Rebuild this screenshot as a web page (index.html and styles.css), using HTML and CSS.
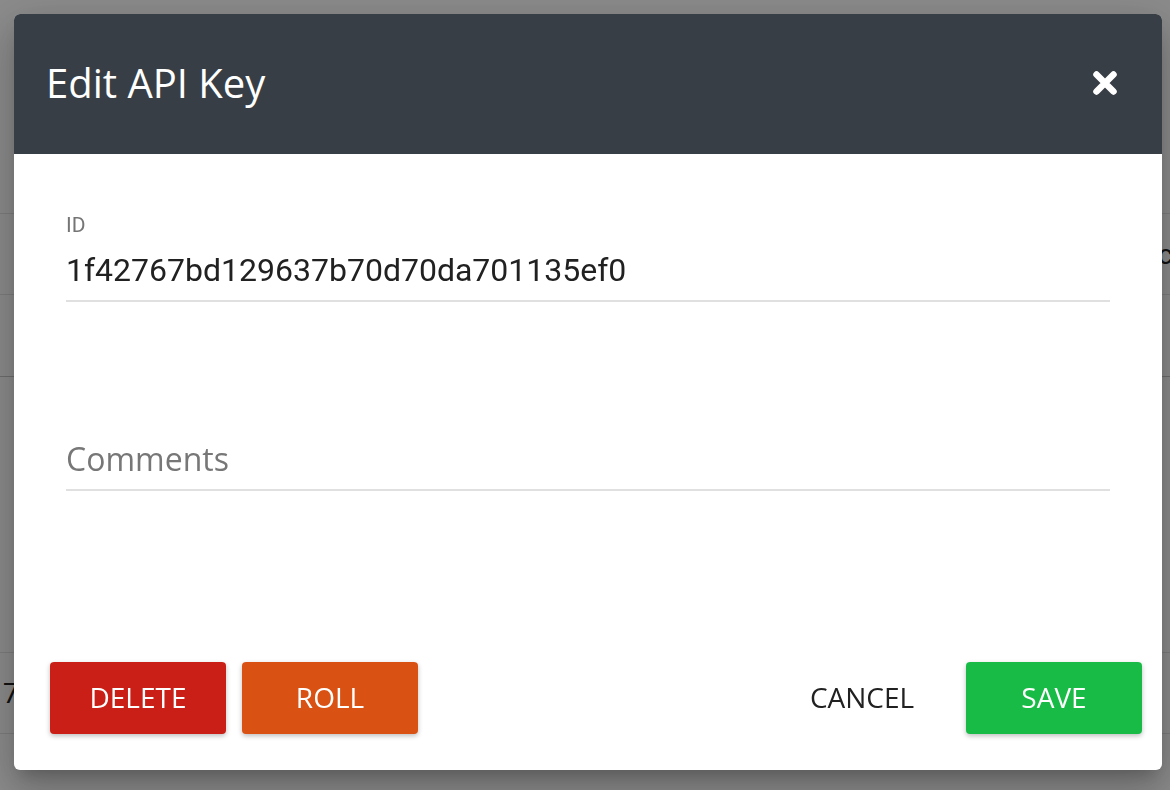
FILE: index.html
```html
<!DOCTYPE html>
<html lang="en">
<head>
<meta charset="utf-8">
<title>Edit API Key</title>
<link rel="stylesheet" href="styles.css">
</head>
<body>
<div class="page">
  <div class="page-top"></div>
  <div class="row"><span class="cell"></span><span class="cell">c</span></div>
  <div class="row row-head"><span class="cell"></span><span class="cell"></span></div>
  <div class="row row-tall"><span class="cell"></span><span class="cell"></span></div>
  <div class="row"><span class="cell cell-left">7</span><span class="cell"></span></div>
</div>

<div class="overlay">
  <div class="modal">
    <div class="modal-header">
      <h1 class="modal-title">Edit API Key</h1>
      <button class="close-btn" aria-label="Close">
        <svg width="26" height="26" viewBox="0 0 26 26"><path d="M4.5 4.5L21.5 21.5M21.5 4.5L4.5 21.5" stroke="#fff" stroke-width="6.5" stroke-linecap="round" fill="none"/></svg>
      </button>
    </div>
    <div class="modal-body">
      <div class="field">
        <div class="field-label">ID</div>
        <div class="field-value">1f42767bd129637b70d70da701135ef0</div>
      </div>
      <div class="field field-comments">
        <div class="field-placeholder">Comments</div>
      </div>
    </div>
    <div class="modal-footer">
      <button class="btn btn-delete">DELETE</button>
      <button class="btn btn-roll">ROLL</button>
      <div class="spacer"></div>
      <button class="btn btn-flat">CANCEL</button>
      <button class="btn btn-save">SAVE</button>
    </div>
  </div>
</div>
</body>
</html>
```

FILE: styles.css
```css
html, body {
  margin: 0;
  padding: 0;
}
body {
  font-family: Roboto, "Open Sans", sans-serif;
  background: #fff;
  overflow: hidden;
  width: 1170px;
  height: 790px;
}

/* underlying page */
.page {
  height: 790px;
}
.page-top {
  height: 213px;
  border-bottom: 1px solid #e4e4e4;
}
.row {
  height: 80px;
  border-bottom: 1px solid #e4e4e4;
  display: grid;
  grid-template-columns: 1158px 1fr;
  align-items: center;
  font-size: 28px;
  color: #222;
  white-space: nowrap;
  overflow: hidden;
}
.row-head {
  height: 81px;
  border-bottom-color: #c8c8c8;
}
.row-tall {
  height: 275px;
}
.cell-left {
  padding-left: 3px;
}

/* overlay + modal */
.overlay {
  position: fixed;
  inset: 0;
  background: rgba(0, 0, 0, 0.455);
  display: flex;
  align-items: flex-start;
  padding: 14px 0 0 14px;
  box-sizing: border-box;
}
.modal {
  width: 1148px;
  height: 756px;
  background: #fff;
  border-radius: 6px;
  overflow: hidden;
  display: flex;
  flex-direction: column;
  box-shadow: 0 11px 15px -7px rgba(0,0,0,.2), 0 24px 38px 3px rgba(0,0,0,.14), 0 9px 46px 8px rgba(0,0,0,.12);
}
.modal-header {
  height: 140px;
  flex: none;
  background: #383e45;
  display: flex;
  align-items: center;
  justify-content: space-between;
  padding: 0 44px 3px 32px;
  box-sizing: border-box;
}
.modal-title {
  margin: 0;
  font-family: "Open Sans", sans-serif;
  font-weight: 400;
  font-size: 40px;
  line-height: 40px;
  color: #fff;
}
.close-btn {
  border: 0;
  background: none;
  padding: 0;
  width: 26px;
  height: 26px;
  display: block;
}
.close-btn svg {
  display: block;
}

.modal-body {
  padding: 59px 52px 0;
}
.field-label {
  font-family: Roboto, sans-serif;
  font-size: 21px;
  line-height: 24px;
  color: #757575;
}
.field-value {
  margin-top: 13px;
  font-family: Roboto, sans-serif;
  font-size: 32px;
  line-height: 40px;
  color: #212121;
  padding-bottom: 10px;
  border-bottom: 2px solid #e0e0e0;
}
.field-comments {
  margin-top: 137px;
  padding-bottom: 10px;
  border-bottom: 2px solid #e0e0e0;
}
.field-placeholder {
  font-family: "Open Sans", sans-serif;
  font-size: 32px;
  line-height: 40px;
  color: #777;
}

.modal-footer {
  margin-top: auto;
  display: flex;
  gap: 16px;
  padding: 0 20px 36px 36px;
}
.spacer {
  flex: 1;
}
.btn {
  width: 176px;
  height: 72px;
  border: 0;
  border-radius: 4px;
  font-family: "Open Sans", sans-serif;
  font-size: 28px;
  line-height: 28px;
  color: #fff;
  padding: 0 0 2px;
  display: flex;
  align-items: center;
  justify-content: center;
  box-shadow: 0 2px 5px rgba(0,0,0,.26);
}
.btn-delete {
  background: #c91f16;
}
.btn-roll {
  background: #d95113;
}
.btn-save {
  background: #19bb47;
}
.btn-flat {
  background: transparent;
  color: #212121;
  box-shadow: none;
}
```
